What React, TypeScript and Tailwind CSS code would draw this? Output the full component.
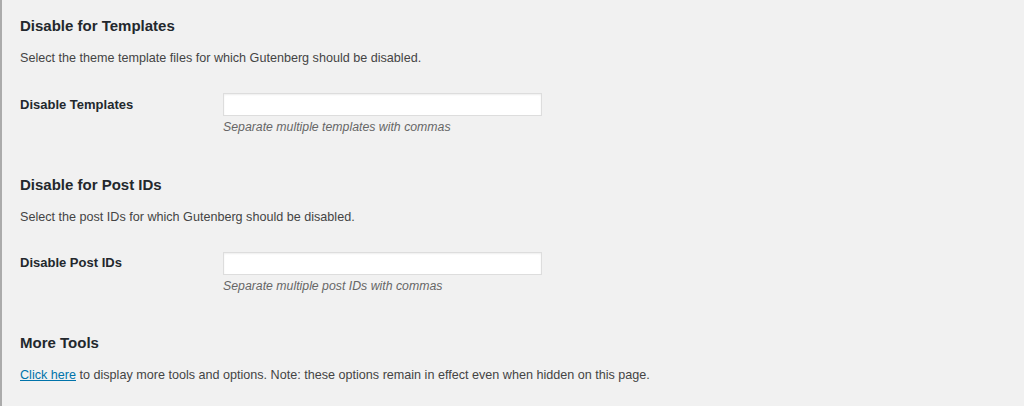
import React from "react";

function Section({
  title,
  desc,
  label,
  help,
  first,
}: {
  title: string;
  desc: string;
  label: string;
  help: string;
  first?: boolean;
}) {
  return (
    <section className={first ? "" : "mt-[38.6px]"}>
      <h2 className="text-[15px] leading-[20px] font-bold text-[#23282d]">{title}</h2>
      <p className="mt-[13px] text-[12.6px] leading-[18px] text-[#444]">{desc}</p>
      <div className="mt-[26px] flex items-center">
        <div className="w-[203px] text-[13px] leading-[18px] font-bold text-[#23282d]">{label}</div>
        <input
          type="text"
          className="w-[319px] h-[23px] bg-white border border-[#dddddd] shadow-[inset_0_1px_2px_rgba(0,0,0,0.07)] outline-none"
        />
      </div>
      <p className="mt-[2px] pl-[203px] text-[12.3px] leading-[18px] italic text-[#666]">{help}</p>
    </section>
  );
}

export default function App() {
  return (
    <div
      className="w-[1024px] h-[406px] bg-[#f1f1f1] border-l-2 border-[#ababab] overflow-hidden"
      style={{ fontFamily: '"Liberation Sans", Arial, sans-serif' }}
    >
      <div className="pl-[18px] pt-[16px]">
        <Section
          first
          title="Disable for Templates"
          desc="Select the theme template files for which Gutenberg should be disabled."
          label="Disable Templates"
          help="Separate multiple templates with commas"
        />
        <Section
          title="Disable for Post IDs"
          desc="Select the post IDs for which Gutenberg should be disabled."
          label="Disable Post IDs"
          help="Separate multiple post IDs with commas"
        />
        <section className="mt-[38.6px]">
          <h2 className="text-[15px] leading-[20px] font-bold text-[#23282d]">More Tools</h2>
          <p className="mt-[13px] text-[12.6px] leading-[18px] text-[#444]">
            <a href="#" className="text-[#0073aa] underline">
              Click here
            </a>{" "}
            to display more tools and options. Note: these options remain in effect even when hidden on this page.
          </p>
        </section>
      </div>
    </div>
  );
}
